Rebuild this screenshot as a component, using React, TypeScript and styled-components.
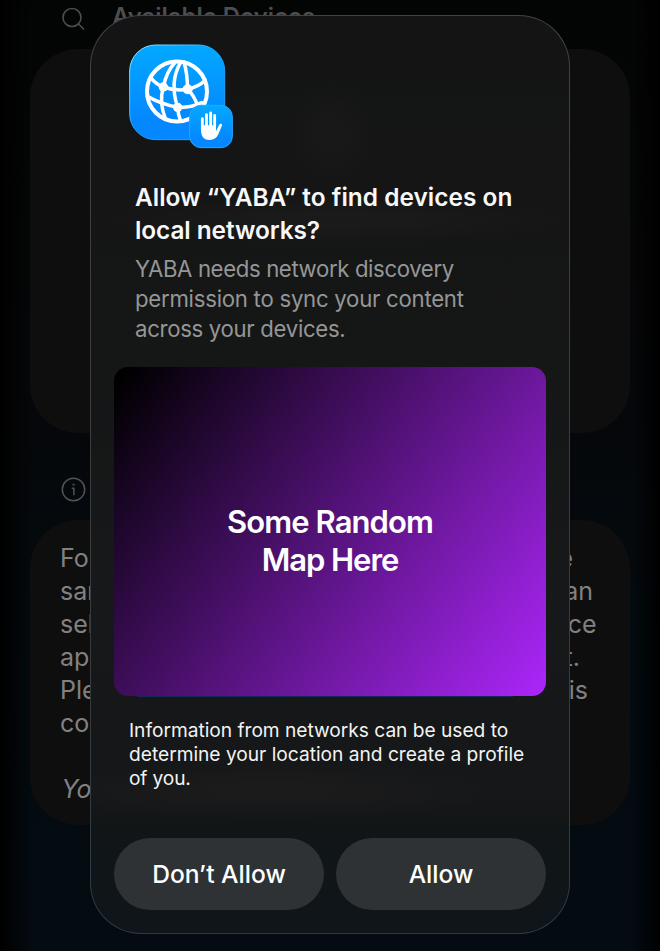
import React from "react";
import styled, { createGlobalStyle } from "styled-components";

const GlobalStyle = createGlobalStyle`
  * { box-sizing: border-box; }
  body {
    margin: 0;
    background: #fff;
    font-family: Inter, "Liberation Sans", sans-serif;
  }
`;

const Screen = styled.div`
  position: relative;
  width: 660px;
  height: 951px;
  overflow: hidden;
  background:
    linear-gradient(90deg, #000 0, transparent 34px, transparent 632px, #000 100%),
    linear-gradient(180deg, #030404 0, #050607 25%, #05080b 48%, #030b10 70%, #040b12 100%);
`;

const Page = styled.main`
  display: flex;
  flex-direction: column;
  padding: 0 30px;
`;

const SectionHeader = styled.header<{ $height: number; $top: number }>`
  display: flex;
  align-items: flex-start;
  gap: 27px;
  height: ${(p) => p.$height}px;
  padding: ${(p) => p.$top}px 0 0 31px;
  color: #4d4e4f;
`;

const SectionTitle = styled.h2`
  margin: -2px 0 0;
  font-size: 23.9px;
  line-height: 24px;
  font-weight: 600;
`;

const Card = styled.section<{ $height: number }>`
  height: ${(p) => p.$height}px;
  padding: 22px 30px 0;
  border-radius: 48px;
  background: #0e0e0e;
`;

const HelpLine = styled.div<{ $italic?: boolean }>`
  display: flex;
  justify-content: space-between;
  height: 33px;
  padding-left: ${(p) => (p.$italic ? 1.5 : 0)}px;
  font-size: 25px;
  line-height: 33px;
  color: #818181;
  font-style: ${(p) => (p.$italic ? "italic" : "normal")};
`;

const LineEnd = styled.span<{ $inset: number }>`
  margin-right: ${(p) => p.$inset}px;
`;

const Dialog = styled.div`
  position: absolute;
  left: 90px;
  top: 15px;
  width: 480px;
  height: 919px;
  display: flex;
  flex-direction: column;
  padding: 28px 23px 0;
  border: 1px solid transparent;
  border-radius: 51px;
  background:
    radial-gradient(ellipse 46px 50px at 240px 118px, #181818 30%, transparent 100%) padding-box,
    radial-gradient(ellipse 230px 24px at 245px 204px, #1a1a1a 30%, transparent 100%) padding-box,
    radial-gradient(ellipse 240px 28px at 180px 775px, #1b1b1c 20%, transparent 100%) padding-box,
    linear-gradient(180deg, #141414 0, #151616 35%, #161819 60%, #161718 84%, #111517 90%, #0f1519 100%) padding-box,
    linear-gradient(180deg, #414243 0, #3c3e40 45%, #353b41 80%, #2b3c49 100%) border-box;
`;

const AppIcon = styled.svg`
  display: block;
  flex: none;
  width: 106px;
  height: 105px;
  margin-left: 14px;
`;

const Heading = styled.div`
  padding: 32px 0 0 21px;
`;

const Title = styled.h1`
  margin: 0;
  color: #f8f8f8;
  font-size: 24.4px;
  line-height: 33px;
  font-weight: 600;
  white-space: nowrap;
`;

const Subtitle = styled.p`
  margin: 7px 0 0;
  color: #959696;
  font-size: 22.2px;
  line-height: 30px;
  white-space: nowrap;
`;

const Line = styled.span<{ $tracking: number }>`
  display: block;
  letter-spacing: ${(p) => p.$tracking}px;
`;

const MapPreview = styled.div`
  display: flex;
  flex: none;
  align-items: center;
  justify-content: center;
  width: 432px;
  height: 329px;
  margin-top: 23px;
  padding-top: 19px;
  border-radius: 14px;
  background: linear-gradient(127.3deg, #000 2%, #a925f5 98%);
  color: #fff;
  font-size: 31px;
  line-height: 38px;
  font-weight: 600;
  text-align: center;
`;

const MapEdge = styled.div`
  flex: none;
  width: 376px;
  height: 1px;
  margin-left: 23px;
  background: #14285a;
`;

const Notice = styled.p`
  margin: 21px 0 0 15px;
  color: #f2f3f3;
  font-size: 19.2px;
  line-height: 24px;
  white-space: nowrap;
`;

const Actions = styled.div`
  display: flex;
  gap: 12px;
  margin-top: 48px;
`;

const ActionButton = styled.button`
  flex: 1;
  height: 72px;
  padding: 0;
  border: 0;
  border-radius: 36px;
  background: #2e3235;
  color: #fff;
  font: 500 24.6px/72px Inter, "Liberation Sans", sans-serif;
`;

const SearchIcon = () => (
  <svg width="24" height="24" viewBox="0 0 24 24" fill="none" stroke="currentColor" strokeWidth="1.6" strokeLinecap="round">
    <circle cx="11" cy="10.5" r="9" />
    <path d="M17.5 17L22.5 22" />
  </svg>
);

const InfoIcon = () => (
  <svg width="25" height="25" viewBox="0 0 25 25" fill="none" stroke="#515253" strokeWidth="1.5" strokeLinecap="round" strokeLinejoin="round">
    <circle cx="12.5" cy="12.5" r="11.2" />
    <path d="M11.300 11.200h1.600v6.600" />
    <circle cx="12.500" cy="7.700" r=".7" fill="#515253" strokeWidth=".8" />
  </svg>
);

const NetworkIcon = () => (
  <AppIcon viewBox="54 42 318 315">
    <defs>
      <linearGradient id="tile" x1="0" y1="0" x2="0" y2="1">
        <stop offset="0" stopColor="#03a9ff" />
        <stop offset=".8" stopColor="#0487ff" />
      </linearGradient>
      <linearGradient id="rim" x1="0" y1="0" x2="1" y2="1">
        <stop offset="0" stopColor="#a5edff" />
        <stop offset=".3" stopColor="#4cc4ff" />
        <stop offset=".5" stopColor="#16a0ff" />
        <stop offset="1" stopColor="#2aa4fb" />
      </linearGradient>
    </defs>
    <rect x="59" y="45" width="285" height="284" rx="78" fill="url(#tile)" stroke="url(#rim)" strokeWidth="3" />
    <g fill="none" stroke="#fff" strokeWidth="10.500" strokeLinecap="round">
      <circle cx="201" cy="184.500" r="90" strokeWidth="12" />
      <path d="M197 95Q169 124 160 171Q146 218 167 268" />
      <path d="M213 95Q177 155 203 232Q204 254 212 272" />
      <path d="M222 96Q232 130 233 178Q250 194 262 224" />
      <path d="M122 143Q139 164 160 171Q197 184 233 178Q267 169 283 153" />
      <path d="M112 199Q153 223 203 232Q242 234 275 218" />
    </g>
    <g fill="#fff">
      <circle cx="160" cy="171" r="14" />
      <circle cx="233" cy="178" r="15" />
      <circle cx="203" cy="232" r="14" />
    </g>
    <rect x="239" y="226" width="128" height="127" rx="34" fill="url(#tile)" stroke="#28a7ff" strokeWidth="3" />
    <path
      d="M277 296V266M289.500 292V254M302 292V249M314 292V256"
      fill="none" stroke="#fff" strokeWidth="8.500" strokeLinecap="round"
    />
    <path
      d="M273 286H318V304L327 285Q331 279 335 282Q337 284 335 289L325 313Q317 330 299 330Q274 330 273 303Z"
      fill="#fff"
    />
  </AppIcon>
);

const helpLines = [
  { start: "Fo", end: "e", inset: 27 },
  { start: "sam", end: "an", inset: 7 },
  { start: "sel", end: "ce", inset: 3.5 },
  { start: "ap", end: "t.", inset: 20 },
  { start: "Ple", end: "is", inset: 12 },
  { start: "co", end: "", inset: 0 },
  { start: "", end: "", inset: 0 },
];

export default function App() {
  return (
    <>
      <GlobalStyle />
      <Screen>
        <Page>
          <SectionHeader $height={49} $top={7}>
            <SearchIcon />
            <SectionTitle>Available Devices</SectionTitle>
          </SectionHeader>
          <Card $height={384} />
          <SectionHeader $height={87} $top={44}>
            <InfoIcon />
          </SectionHeader>
          <Card $height={305}>
            {helpLines.map((line, i) => (
              <HelpLine key={i}>
                <span>{line.start}</span>
                <LineEnd $inset={line.inset}>{line.end}</LineEnd>
              </HelpLine>
            ))}
            <HelpLine $italic>Yo</HelpLine>
          </Card>
        </Page>
        <Dialog role="dialog">
          <NetworkIcon />
          <Heading>
            <Title>
              <Line $tracking={0.03}>Allow “YABA” to find devices on</Line>
              <Line $tracking={-0.08}>local networks?</Line>
            </Title>
            <Subtitle>
              <Line $tracking={-0.38}>YABA needs network discovery</Line>
              <Line $tracking={-0.26}>permission to sync your content</Line>
              <Line $tracking={-0.32}>across your devices.</Line>
            </Subtitle>
          </Heading>
          <MapPreview>
            <div>
              <Line $tracking={-0.92}>Some Random</Line>
              <Line $tracking={-1.05}>Map Here</Line>
            </div>
          </MapPreview>
          <MapEdge />
          <Notice>
            <Line $tracking={-0.03}>Information from networks can be used to</Line>
            <Line $tracking={-0.02}>determine your location and create a profile</Line>
            <Line $tracking={-0.15}>of you.</Line>
          </Notice>
          <Actions>
            <ActionButton>Don’t Allow</ActionButton>
            <ActionButton>Allow</ActionButton>
          </Actions>
        </Dialog>
      </Screen>
    </>
  );
}
